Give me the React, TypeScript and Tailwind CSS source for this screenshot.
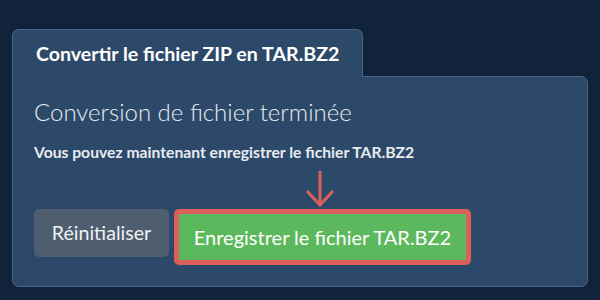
import React from "react";

export default function App() {
  return (
    <div
      className="w-[600px] h-[300px] bg-[#11233a] pt-[29px] pl-[12px]"
      style={{ fontFamily: "Lato, 'Noto Sans', sans-serif" }}
    >
      <div className="relative z-10 -mb-px w-[351px] h-[48px] bg-[#2d4969] border border-b-0 border-[#4b6688] rounded-t-[7px] pl-[23px] pt-[12px]">
        <span className="text-[19.6px] font-bold text-white leading-[24px]">
          Convertir le fichier ZIP en TAR.BZ2
        </span>
      </div>
      <div className="w-[576px] h-[211px] bg-[#2d4969] border border-[#4b6688] rounded-b-[7px] rounded-tr-[7px] pl-[21px] pt-[20px]">
        <div className="text-[24px] font-light text-[#e8ecf0] leading-[30px]">
          Conversion de fichier terminée
        </div>
        <div className="mt-[16px] text-[15.7px] font-bold text-[#e8ecf0] leading-[18px]">
          Vous pouvez maintenant enregistrer le fichier TAR.BZ2
        </div>
        <div className="relative mt-[48px] flex items-start gap-[5px]">
          <button className="w-[135px] h-[48px] rounded-[5px] bg-[#4e5e6f] text-[19.6px] text-[#eef1f4] leading-none">
            Réinitialiser
          </button>
          <button className="w-[297px] h-[56px] rounded-[5px] bg-[#5cb85c] border-[5px] border-[#dd5f5b] text-[20px] text-white leading-none">
            Enregistrer le fichier TAR.BZ2
          </button>
          <svg
            className="absolute left-[272px] top-[-38px]"
            width="30"
            height="38"
            viewBox="0 0 30 38"
            fill="none"
            stroke="#dd5f5b"
            strokeWidth="3"
            strokeLinecap="butt"
          >
            <line x1="14" y1="0" x2="14" y2="34" />
            <polyline points="1,20 14,34 27,20" />
          </svg>
        </div>
      </div>
    </div>
  );
}
